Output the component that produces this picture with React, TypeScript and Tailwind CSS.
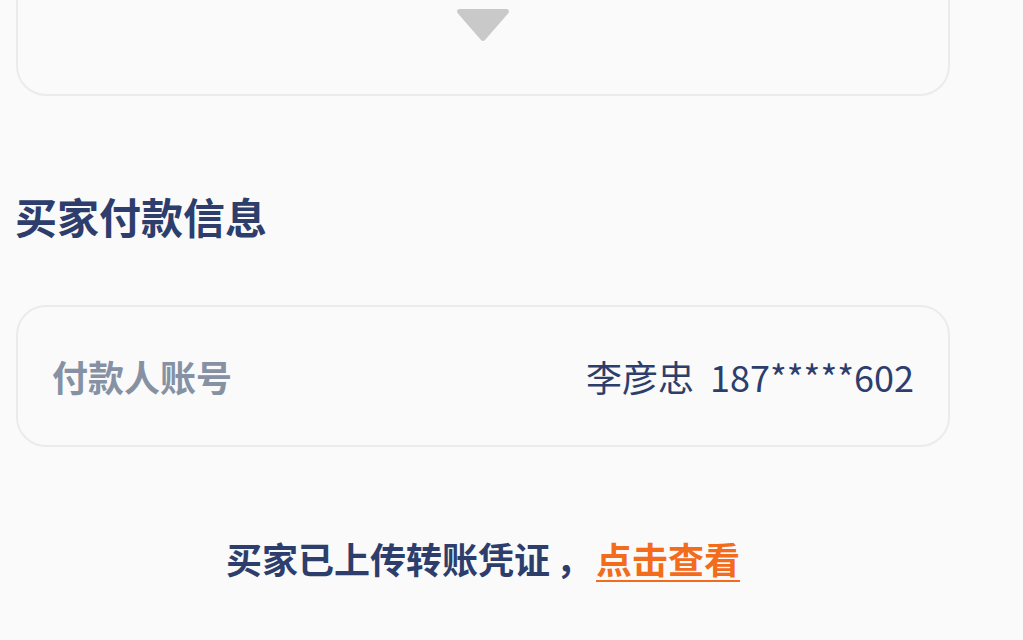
import React from "react";

const font = { fontFamily: '"Noto Sans CJK SC", "Noto Sans", sans-serif' };

const App: React.FC = () => {
  return (
    <div
      className="w-[1023px] h-[640px] overflow-hidden bg-[#fafafa] px-[16px]"
      style={font}
    >
      <div className="w-[934px]">
        {/* collapsed card, top is scrolled off */}
        <div className="h-[96px] border-2 border-t-0 border-[#ebebeb] rounded-b-[30px] flex justify-center pt-[9px]">
          <svg width="54" height="33" viewBox="0 0 54 33">
            <path
              d="M4 0 H50 Q54 0 52.5 4 L29 31 Q27 33 25 31 L1.5 4 Q0 0 4 0 Z"
              fill="#c9c9c9"
            />
          </svg>
        </div>

        {/* section title */}
        <h2 className="mt-[90px] h-[60px] leading-[60px] text-[42px] font-bold text-[#2d3e6d] -ml-[1px]">
          买家付款信息
        </h2>

        {/* payer info card */}
        <div className="mt-[59px] h-[142px] border-2 border-[#ebebeb] rounded-[30px] flex items-center justify-between px-[34px]">
          <span className="text-[36px] font-bold text-[#8691a3]">付款人账号</span>
          <span className="text-[36px] text-[#2d3e6d]">
            李彦忠&nbsp;&nbsp;187*****602
          </span>
        </div>

        {/* voucher notice */}
        <p className="mt-[81px] h-[60px] leading-[60px] text-center text-[36px] font-bold text-[#2d3e6d]">
          买家已上传转账凭证<span className="ml-[6px] mr-[4px]">，</span>
          <span className="text-[#f36c1b] underline underline-offset-[6px] decoration-2">
            点击查看
          </span>
        </p>
      </div>
    </div>
  );
};

export default App;
